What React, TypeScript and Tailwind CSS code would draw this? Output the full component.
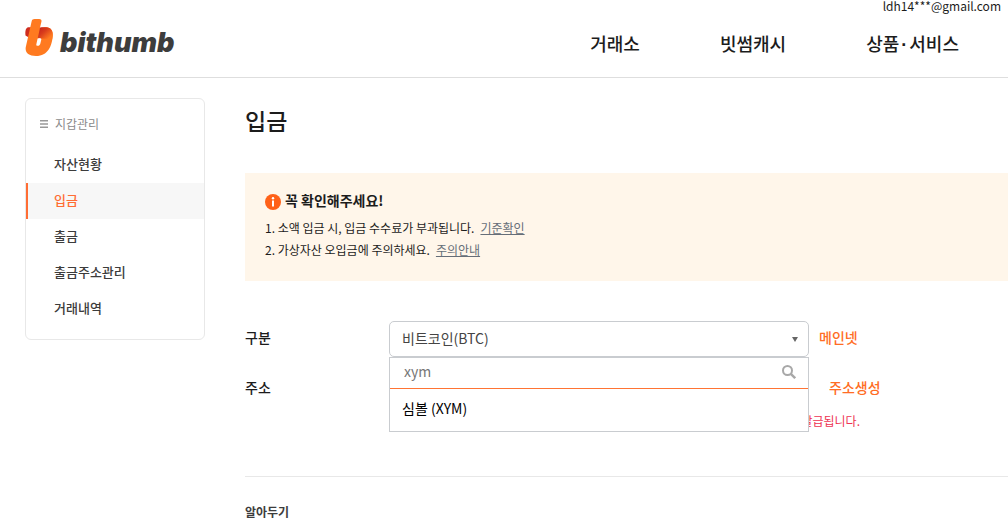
import React from "react";
import { clsx } from "clsx";

const menuItems = ["자산현황", "입금", "출금", "출금주소관리", "거래내역"];

function LogoMark() {
  return (
    <svg viewBox="0 0 28 37" className="h-[37px] w-7" aria-hidden="true">
      <defs>
        <linearGradient id="fold" gradientUnits="userSpaceOnUse" x1="15" y1="9" x2="24" y2="19">
          <stop offset="0" stopColor="#c9271c" />
          <stop offset="0.4" stopColor="#d83c1c" />
          <stop offset="1" stopColor="#ff7a20" />
        </linearGradient>
      </defs>
      <path d="M3.4 8.3H15V18H3L0.5 16.6C0 13 0.4 8.6 3.4 8.3Z" fill="#cf2d1e" />
      <path
        fillRule="evenodd"
        fill="#ff7a20"
        d="M6.6 2.4C7 .8 8 0 9.6 0H14.2C16 0 16.8 1 16.4 2.8L14.8 9.6C17 8.4 19 8.3 21.5 8.3C26 8.6 28.2 12 27.7 17C27 27 23 37 11 37C3 37-.4 33 .9 27.6ZM12.6 19.4L11.4 25C11.1 26.2 11.5 26.8 12.5 26.8C14.4 26.8 15.2 25.6 15.6 23.4L16.2 21C16.5 19.6 16 19 15 19Z"
      />
      <path d="M15.1 8.5C17 8.2 19 8.3 21.5 8.3C26 8.6 28.2 12 27.7 17L27.2 20.2L16.2 19.6C15.6 18.9 14.6 18.9 12.8 19Z" fill="url(#fold)" />
    </svg>
  );
}

export default function App() {
  return (
    <div className="min-h-screen overflow-x-hidden bg-white font-['Noto_Sans_CJK_KR',sans-serif] text-[#1c1c1c]">
      <header className="border-b border-[#dedede]">
        <div className="flex h-3 items-start justify-end pr-[7px] text-xs leading-3">
          <span>ldh14***@gmail.com</span>
        </div>
        <div className="flex h-[65px] items-start justify-between pr-[49px] pl-[25px]">
          <a href="#" aria-label="bithumb" className="mt-[7px] flex items-start gap-[7px]">
            <LogoMark />
            <span className="mt-2 font-['Inter'] text-[27px] leading-8 font-black text-[#3d3d3d] italic">bithumb</span>
          </a>
          <nav className="mt-[18px] flex gap-20 text-lg leading-[26px] font-medium">
            <a href="#">거래소</a>
            <a href="#">빗썸캐시</a>
            <a href="#">
              상품<span className="px-0.5 font-['Liberation_Sans'] font-bold">·</span>서비스
            </a>
          </nav>
        </div>
      </header>

      <div className="flex items-start gap-10 pl-[25px]">
        <aside className="mt-5 w-[180px] shrink-0 rounded-md border border-[#e8e8e8] pb-3">
          <h2 className="flex h-12 items-center gap-[7px] pt-0.5 pl-3.5 text-xs text-[#8c8c8c]">
            <svg viewBox="0 0 8 8" className="size-2" fill="#999" aria-hidden="true">
              <path d="M0 0h8v1.5H0zM0 3.2h8v1.5H0zM0 6.4h8v1.5H0z" />
            </svg>
            지갑관리
          </h2>
          <ul className="text-[13px] leading-[34px] font-medium text-[#3c3c3c]">
            {menuItems.map((item) => (
              <li key={item}>
                <a
                  href="#"
                  className={clsx(
                    "block border-l-2 pb-0.5 pl-[26px]",
                    item === "입금" ? "border-[#ff6d34] bg-[#f7f7f7] text-[#ff6d34]" : "border-transparent",
                  )}
                >
                  {item}
                </a>
              </li>
            ))}
          </ul>
        </aside>

        <main className="min-w-0 flex-1 pt-[22px]">
          <h1 className="text-[23px] leading-10 font-medium">입금</h1>

          <section className="mt-[33px] bg-[#fff6ea] px-5 pt-4 pb-5">
            <h2 className="flex items-center gap-1 text-sm leading-[22px] font-bold">
              <svg viewBox="0 0 16 16" className="mt-1 size-4" aria-hidden="true">
                <circle cx="8" cy="8" r="8" fill="#ff6118" />
                <circle cx="8" cy="4.3" r="1.2" fill="#fff" />
                <path d="M7 6.6h2v6H7z" fill="#fff" />
              </svg>
              꼭 확인해주세요!
            </h2>
            <ol className="mt-1.5 text-xs leading-[22px]">
              <li>
                1. 소액 입금 시, 입금 수수료가 부과됩니다.
                <a href="#" className="ml-1.5 text-[#666e78] underline">기준확인</a>
              </li>
              <li>
                2. 가상자산 오입금에 주의하세요.
                <a href="#" className="ml-1.5 text-[#666e78] underline">주의안내</a>
              </li>
            </ol>
          </section>

          <form className="mt-10 text-sm">
            <div className="flex items-center">
              <label htmlFor="coin" className="w-36 shrink-0 pb-1 font-medium">구분</label>
              <div className="relative w-[420px] shrink-0">
                <select
                  id="coin"
                  className="block h-9 w-full appearance-none rounded-[5px] border border-[#c9ccd0] bg-white px-3 pb-0.5 text-[#444]"
                >
                  <option>비트코인(BTC)</option>
                </select>
                <svg viewBox="0 0 6 5" className="pointer-events-none absolute top-4 right-[11px] h-[5px] w-1.5" fill="#666" aria-hidden="true">
                  <path d="M0 0h6L3 5z" />
                </svg>
                <div className="absolute top-full left-0 z-10 w-full border border-[#c9ccd0] bg-white">
                  <div className="flex items-center border-b border-[#ff7434] pr-3 pl-3.5">
                    <input
                      aria-label="코인 검색"
                      defaultValue="xym"
                      className="h-[30px] min-w-0 flex-1 pb-1 text-[#777] outline-none"
                    />
                    <svg viewBox="0 0 14 14" className="mb-0.5 size-3.5" fill="none" stroke="#a8a8a8" strokeWidth="2" aria-hidden="true">
                      <circle cx="5.5" cy="5.5" r="4.5" />
                      <path d="M8.8 8.8L13.2 13.2" strokeWidth="2.4" />
                    </svg>
                  </div>
                  <button type="button" className="block h-[42px] w-full px-3 pb-1 text-left text-black">
                    심볼 (XYM)
                  </button>
                </div>
              </div>
              <a href="#" className="ml-2.5 pb-1 font-medium text-[#ff6d24]">메인넷</a>
            </div>
            <div className="mt-3 flex h-[38px] items-center pb-0.5">
              <span className="w-36 shrink-0 font-medium">주소</span>
              <button type="button" className="ml-[440px] font-medium text-[#ff6d24]">주소생성</button>
            </div>
            <p className="mt-0.5 w-[615px] text-right text-xs leading-6 text-[#ee3352]">발급됩니다.</p>
          </form>

          <section className="mt-[43px] border-t border-[#e8e8e8] pt-[25px]">
            <h2 className="text-xs leading-5 font-bold text-[#3c3c3c]">알아두기</h2>
          </section>
        </main>
      </div>
    </div>
  );
}
